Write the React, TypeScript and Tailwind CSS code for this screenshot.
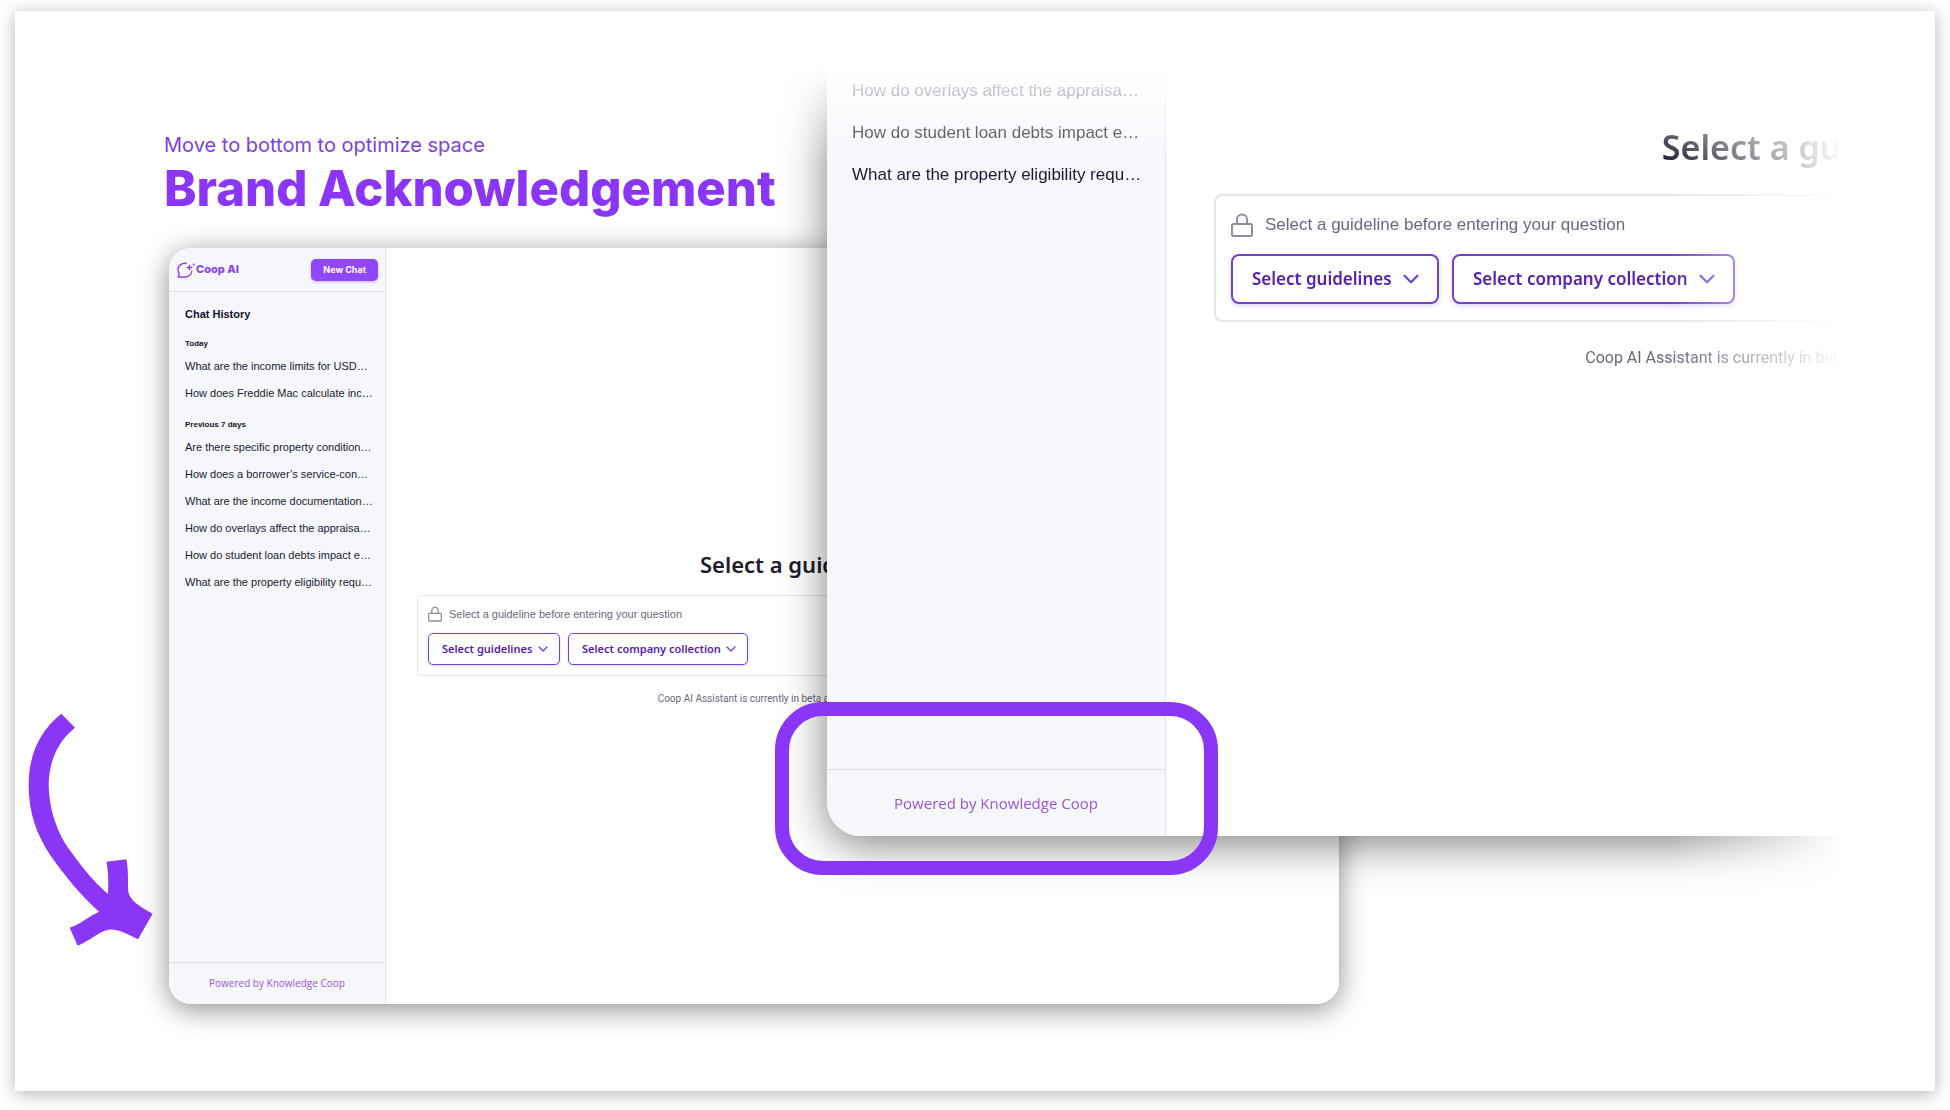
import { ChevronDown } from 'lucide-react';
import { clsx } from 'clsx';

type Size = 'sm' | 'lg';

interface HistoryGroup {
  label: string;
  items: string[];
}

const HISTORY: HistoryGroup[] = [
  {
    label: 'Today',
    items: [
      'What are the income limits for USD…',
      'How does Freddie Mac calculate inc…',
    ],
  },
  {
    label: 'Previous 7 days',
    items: [
      'Are there specific property condition…',
      'How does a borrower’s service-con…',
      'What are the income documentation…',
      'How do overlays affect the appraisa…',
      'How do student loan debts impact e…',
      'What are the property eligibility requ…',
    ],
  },
];

const RECENT = HISTORY[1].items.slice(3);

function LogoMark() {
  return (
    <svg viewBox="0 0 36 32" className="h-4 w-[18px]" fill="none" stroke="#8b45ee" strokeWidth="2.8" strokeLinejoin="round">
      <path d="M20 3C10 0.500 2 7.500 2 15.500C2 19 3.500 21.500 4.500 23L2.500 30H16C24 30 30 24 29.500 17" />
      <path d="M25 4L26.900 9.100L32 11L26.900 12.900L25 18L23.100 12.900L18 11L23.100 9.100Z" fill="#8b45ee" stroke="none" />
      <circle cx="33.500" cy="5" r="2" fill="#8b45ee" stroke="none" />
    </svg>
  );
}

function LockIcon({ size }: { size: Size }) {
  return (
    <svg
      viewBox="0 0 22 24"
      className={clsx('shrink-0', size === 'sm' ? 'h-4 w-[14px]' : 'h-6 w-[22px]')}
      fill="none"
      stroke="#8f8da0"
      strokeWidth="2"
    >
      <rect x="1" y="11" width="20" height="12" rx="1.500" />
      <path d="M6 11V6.500a5 5 0 0 1 10 0V11" />
    </svg>
  );
}

function HistoryLink({ text, size }: { text: string; size: Size }) {
  return (
    <li>
      <a
        href="#"
        className={clsx(
          'flex items-center whitespace-nowrap text-[#1c1a35]',
          size === 'sm' ? 'h-[27px] text-[11px]' : 'h-[42px] text-[17px]'
        )}
      >
        {text}
      </a>
    </li>
  );
}

function PoweredBy({ size }: { size: Size }) {
  return (
    <footer
      className={clsx(
        'mt-auto flex items-center justify-center border-t border-[#dcdde6] font-["Open_Sans",sans-serif] text-[#9a55e0]',
        size === 'sm' ? 'h-[42px] text-[10px]' : 'h-[67px] text-[15px]'
      )}
    >
      Powered by Knowledge Coop
    </footer>
  );
}

function Dropdown({ label, size }: { label: string; size: Size }) {
  return (
    <div className="relative">
      <select
        aria-label={label}
        className={clsx(
          'appearance-none border-[#6f42cf] bg-white font-["Noto_Sans",sans-serif] font-semibold text-[#5521b5]',
          size === 'sm'
            ? 'h-8 rounded-[5px] border pr-[26px] pl-[13px] text-[11px] shadow-[0_1px_3px_rgba(139,69,238,0.25)]'
            : 'h-[50px] rounded-lg border-2 pr-[45px] pl-[19px] text-[17px] shadow-[0_2px_5px_rgba(139,69,238,0.25)]'
        )}
      >
        <option>{label}</option>
      </select>
      <ChevronDown
        strokeWidth={2}
        className={clsx(
          'pointer-events-none absolute top-1/2 -translate-y-1/2 text-[#6f42cf]',
          size === 'sm' ? 'right-[9px] size-4' : 'right-[15px] size-[26px]'
        )}
      />
    </div>
  );
}

function GuidelinePicker({ size }: { size: Size }) {
  const sm = size === 'sm';
  return (
    <section className="flex flex-col">
      <h2
        className={clsx(
          'text-center font-["Noto_Sans",sans-serif] font-semibold whitespace-nowrap text-[#1e1b2e]',
          sm ? 'mb-[13px] text-[22px] leading-9' : 'mb-[18px] text-[34px] leading-[58px]'
        )}
      >
        Select a guideline to get going
      </h2>
      <div
        className={clsx(
          'flex flex-col border-[#e6e6ea] bg-white',
          sm ? 'gap-[11px] rounded-[5px] border p-[10px]' : 'gap-4 rounded-lg border-2 px-[15px] py-4'
        )}
      >
        <label className={clsx('flex items-center', sm ? 'h-4 gap-[7px]' : 'h-[26px] gap-3')}>
          <LockIcon size={size} />
          <input
            type="text"
            disabled
            aria-label="Your question"
            placeholder="Select a guideline before entering your question"
            className={clsx(
              'min-w-0 flex-1 bg-transparent placeholder:text-[#6a677c]',
              sm ? 'text-[11px]' : 'text-[17px]'
            )}
          />
        </label>
        <div className={clsx('flex', sm ? 'gap-2' : 'gap-[13px]')}>
          <Dropdown label="Select guidelines" size={size} />
          <Dropdown label="Select company collection" size={size} />
        </div>
      </div>
      <p
        className={clsx(
          'text-center font-["Roboto",sans-serif] whitespace-nowrap text-[#6a677c]',
          sm ? 'mt-4 text-[10px] leading-[14px]' : 'mt-[25px] text-[16px] leading-[22px]'
        )}
      >
        Coop AI Assistant is currently in beta and may make mistakes. Please verify key information.
      </p>
    </section>
  );
}

function AppWindow() {
  return (
    <div className="flex min-h-[756px] w-[60vw] overflow-hidden rounded-[22px] bg-white shadow-[0_5px_28px_rgba(0,0,0,0.45)]">
      <aside className="flex w-[217px] shrink-0 flex-col border-r border-[#e2e4ea] bg-[#f5f7fb]">
        <header className="flex h-11 items-center justify-between border-b border-[#e0e2ea] pr-[7px] pl-2">
          <div className="flex items-center gap-px font-['Inter',sans-serif] text-[11px] font-extrabold text-[#8b45ee]">
            <LogoMark />
            Coop AI
          </div>
          <button
            type="button"
            className="h-[22px] rounded-[5px] bg-[#9146ff] px-3 font-['Inter',sans-serif] text-[9px] font-bold text-white shadow-[0_1px_3px_rgba(145,70,255,0.4)]"
          >
            New Chat
          </button>
        </header>
        <nav className="flex flex-col pt-[13px] pl-4">
          <h2 className="mb-3 text-[11px] leading-[18px] font-bold text-[#14122b]">Chat History</h2>
          <div className="flex flex-col gap-[9px]">
            {HISTORY.map((group) => (
              <div key={group.label}>
                <h3 className="text-[8px] leading-[18px] font-bold text-[#14122b]">{group.label}</h3>
                <ul>
                  {group.items.map((item) => (
                    <HistoryLink key={item} text={item} size="sm" />
                  ))}
                </ul>
              </div>
            ))}
          </div>
        </nav>
        <PoweredBy size="sm" />
      </aside>
      <main className="flex flex-1 flex-col justify-center px-[31px]">
        <GuidelinePicker size="sm" />
      </main>
    </div>
  );
}

// Enlarged lower-left corner of the app, faded out at the top and right
function DetailWindow() {
  return (
    <div className="absolute top-[47px] right-[92px] left-[752px] overflow-hidden pb-[70px] pl-[60px] [mask-composite:intersect] [mask-image:linear-gradient(to_bottom,transparent_8px,black_105px),linear-gradient(to_left,transparent,black_175px)]">
      <div className="-mr-20 flex h-[778px] overflow-hidden rounded-bl-[34px] bg-white shadow-[0_8px_44px_rgba(0,0,0,0.5)]">
        <aside className="flex w-[339px] shrink-0 flex-col border-r border-[#e2e4ea] bg-[#f5f7fb]">
          <ul className="pt-3 pl-[25px]">
            {RECENT.map((item) => (
              <HistoryLink key={item} text={item} size="lg" />
            ))}
          </ul>
          <PoweredBy size="lg" />
        </aside>
        <div className="w-[1494px] shrink-0 px-12 pt-[60px]">
          <GuidelinePicker size="lg" />
        </div>
      </div>
    </div>
  );
}

function Arrow() {
  return (
    <svg viewBox="80 65 381 705" className="absolute top-[701px] left-3 h-[235px] w-[127px]" fill="#8b36f7">
      <path d="M183 70L224 112C170 155 146 215 145 285C146 350 165 410 195 460C235 518 275 570 323 611C324 580 325 545 318 514L378 507C385 540 382 570 384 605C390 632 420 650 457 670L413 747C375 728 352 716 325 718C292 725 280 745 232 766L208 712C240 702 265 678 296 664C240 615 190 552 150 495C110 435 85 370 85 285C85 190 120 120 183 70Z" />
    </svg>
  );
}

export default function App() {
  return (
    <div className="min-h-screen bg-white px-[15px] pt-[11px] pb-[19px] font-['Liberation_Sans',Arial,sans-serif]">
      <div className="relative min-h-[1080px] overflow-hidden bg-white pt-[120px] pl-[149px] shadow-[0_3px_16px_rgba(0,0,0,0.3)]">
        <p className="font-['Inter',sans-serif] text-xl leading-7 text-[#7c3fe0]">Move to bottom to optimize space</p>
        <h1 className="mb-[29px] font-['Inter',sans-serif] text-[49px] leading-[60px] font-extrabold text-[#8b36f7]">
          Brand Acknowledgement
        </h1>
        <div className="pl-[5px]">
          <AppWindow />
        </div>
        <DetailWindow />
        <div className="absolute top-[691px] left-[760px] h-[173px] w-[443px] rounded-[48px] border-[14px] border-[#8b36f7]" />
        <Arrow />
      </div>
    </div>
  );
}
